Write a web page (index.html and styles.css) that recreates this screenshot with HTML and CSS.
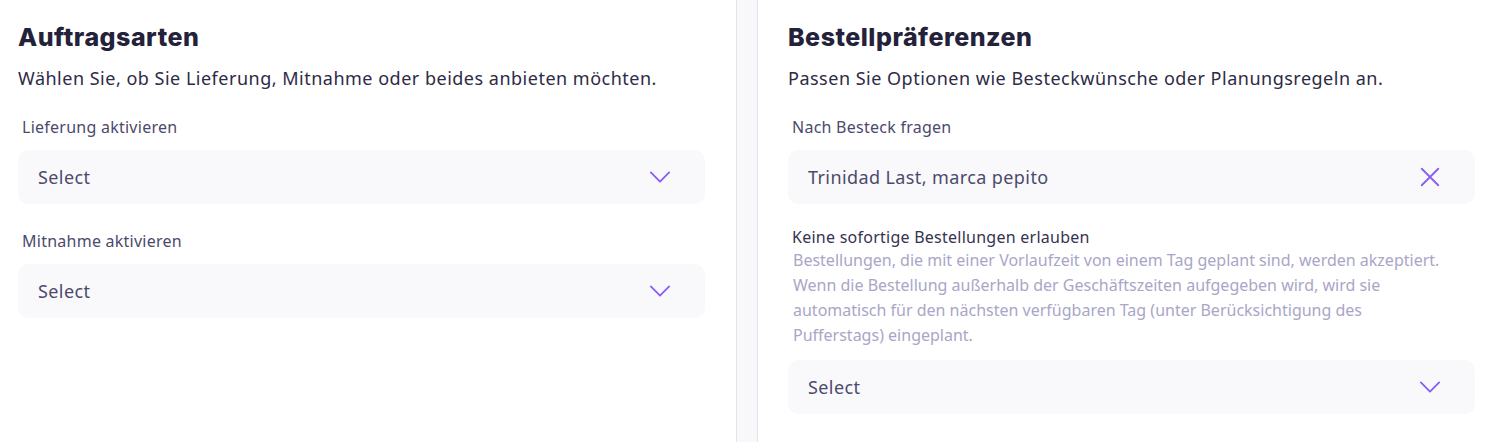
FILE: index.html
```html
<!DOCTYPE html>
<html lang="de">
<head>
    <meta charset="UTF-8">
    <meta name="viewport" content="width=device-width, initial-scale=1.0">
    <title>Einstellungen</title>
    <link rel="stylesheet" href="styles.css">
</head>
<body>
    <div class="settings">
        <section class="panel panel-left">
            <h2 class="panel-title">Auftragsarten</h2>
            <p class="panel-desc">Wählen Sie, ob Sie Lieferung, Mitnahme oder beides anbieten möchten.</p>

            <div class="field">
                <label class="field-label">Lieferung aktivieren</label>
                <div class="select-box">
                    <span class="select-value">Select</span>
                    <svg class="select-icon" width="24" height="24" viewBox="0 0 24 24"><path d="M2 7l10 10 10-10" fill="none" stroke="#8b5cf6" stroke-width="2" stroke-linecap="round" stroke-linejoin="round"/></svg>
                </div>
            </div>

            <div class="field">
                <label class="field-label">Mitnahme aktivieren</label>
                <div class="select-box">
                    <span class="select-value">Select</span>
                    <svg class="select-icon" width="24" height="24" viewBox="0 0 24 24"><path d="M2 7l10 10 10-10" fill="none" stroke="#8b5cf6" stroke-width="2" stroke-linecap="round" stroke-linejoin="round"/></svg>
                </div>
            </div>
        </section>

        <div class="divider"></div>

        <section class="panel panel-right">
            <h2 class="panel-title">Bestellpräferenzen</h2>
            <p class="panel-desc">Passen Sie Optionen wie Besteckwünsche oder Planungsregeln an.</p>

            <div class="field">
                <label class="field-label">Nach Besteck fragen</label>
                <div class="select-box">
                    <span class="select-value">Trinidad Last, marca pepito</span>
                    <svg class="select-icon" width="24" height="24" viewBox="0 0 24 24"><path d="M3 3l18 18M21 3L3 21" fill="none" stroke="#8b5cf6" stroke-width="2" stroke-linecap="round"/></svg>
                </div>
            </div>

            <div class="field field-with-help">
                <label class="field-label">Keine sofortige Bestellungen erlauben</label>
                <p class="field-help">Bestellungen, die mit einer Vorlaufzeit von einem Tag geplant sind, werden akzeptiert. Wenn die Bestellung außerhalb der Geschäftszeiten aufgegeben wird, wird sie automatisch für den nächsten verfügbaren Tag (unter Berücksichtigung des Pufferstags) eingeplant.</p>
                <div class="select-box">
                    <span class="select-value">Select</span>
                    <svg class="select-icon" width="24" height="24" viewBox="0 0 24 24"><path d="M2 7l10 10 10-10" fill="none" stroke="#8b5cf6" stroke-width="2" stroke-linecap="round" stroke-linejoin="round"/></svg>
                </div>
            </div>
        </section>
    </div>
</body>
</html>
```

FILE: styles.css
```css
body {
    margin: 0;
    background-color: #fff;
    font-family: "Noto Sans", "Lato", sans-serif;
    color: #2d2b45;
}

.settings {
    display: flex;
    height: 442px;
}

.panel {
    width: 687px;
    padding-top: 18px;
}

.panel-left {
    padding-left: 18px;
    padding-right: 31px;
}

.panel-right {
    padding-left: 30px;
}

.divider {
    width: 20px;
    background-color: #f8f8fa;
    border-left: 1px solid #e4e2ec;
    border-right: 1px solid #e4e2ec;
}

.panel-title {
    margin: 0;
    font-family: "Inter", sans-serif;
    font-weight: 800;
    font-size: 25px;
    letter-spacing: 0.5px;
    line-height: 38px;
    color: #24223a;
}

.panel-desc {
    margin: 8px 0 0 0;
    font-size: 18px;
    letter-spacing: 0.5px;
    line-height: 28px;
    color: #2d2b45;
}

.field {
    margin-top: 24px;
}

.field + .field {
    margin-top: 26px;
}

.field + .field-with-help {
    margin-top: 22px;
}

.field-label {
    display: block;
    padding-left: 4px;
    font-size: 16px;
    letter-spacing: 0.25px;
    line-height: 22px;
    color: #4b4a6d;
}

.field-with-help .field-label {
    color: #35334f;
}

.field-help {
    max-width: 655px;
    margin: 0;
    padding-left: 5px;
    font-size: 16px;
    line-height: 25px;
    color: #a9a6c6;
}

.select-box {
    display: flex;
    align-items: center;
    justify-content: space-between;
    height: 54px;
    margin-top: 12px;
    padding: 0 34px 0 20px;
    background-color: #f9f9fb;
    border-radius: 10px;
}

.select-value {
    font-size: 18px;
    letter-spacing: 0.4px;
    color: #4b4a6d;
}

.select-icon {
    width: 22px;
    height: 22px;
}
```
